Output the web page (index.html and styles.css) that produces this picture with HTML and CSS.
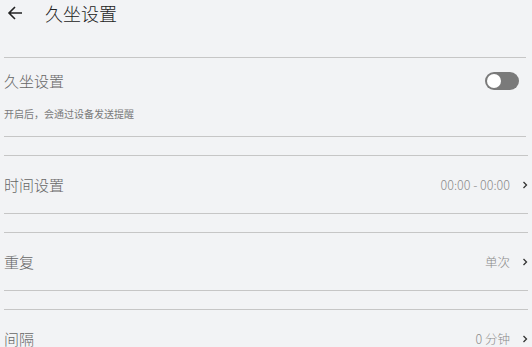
FILE: index.html
```html
<!DOCTYPE html>
<html lang="zh-CN">
<head>
  <meta charset="UTF-8">
  <title>久坐设置</title>
  <link rel="stylesheet" href="styles.css">
</head>
<body>

  <!-- 顶部栏 -->
  <div class="topbar">
    <svg class="back" width="16" height="16" viewBox="0 0 16 16">
      <path d="M15 8H2M8 2L2 8l6 6" fill="none" stroke="#222" stroke-width="1.6"/>
    </svg>
    <span class="page-title">久坐设置</span>
  </div>

  <!-- 开关 -->
  <div class="group switch-group">
    <div class="row-head">
      <span class="label">久坐设置</span>
      <span class="toggle"><span class="knob"></span></span>
    </div>
    <div class="hint">开启后，会通过设备发送提醒</div>
  </div>

  <div class="group item">
    <span class="label">时间设置</span>
    <span class="value">00:00 - 00:00</span>
    <svg class="arrow" width="6" height="8" viewBox="0 0 6 8"><path d="M1.5 1l3 3-3 3" fill="none" stroke="#333" stroke-width="1.3"/></svg>
  </div>

  <div class="group item">
    <span class="label">重复</span>
    <span class="value">单次</span>
    <svg class="arrow" width="6" height="8" viewBox="0 0 6 8"><path d="M1.5 1l3 3-3 3" fill="none" stroke="#333" stroke-width="1.3"/></svg>
  </div>

  <div class="group item">
    <span class="label">间隔</span>
    <span class="value">0 分钟</span>
    <svg class="arrow" width="6" height="8" viewBox="0 0 6 8"><path d="M1.5 1l3 3-3 3" fill="none" stroke="#333" stroke-width="1.3"/></svg>
  </div>

</body>
</html>
```

FILE: styles.css
```css
body {
  margin: 0;
  padding: 0 4px 0 4px;
  background-color: #f2f3f5;
  font-family: "Noto Sans CJK SC", "Noto Sans", sans-serif;
}

.topbar {
  height: 57px;
  display: flex;
  align-items: flex-start;
  box-sizing: border-box;
}

.back {
  margin: 5px 0 0 3px;
}

.page-title {
  margin-left: 22px;
  font-size: 18px;
  line-height: 26px;
  font-weight: 300;
  color: #222;
}

.group {
  border-top: 1px solid #c6c6c6;
  border-bottom: 1px solid #c6c6c6;
  margin-bottom: 18px;
  margin-right: 2px;
}

.switch-group {
  padding: 13px 0 15px;
}

.row-head {
  display: flex;
  align-items: center;
  justify-content: space-between;
  height: 20px;
}

.label {
  font-size: 15px;
  line-height: 20px;
  font-weight: 300;
  color: #666;
}

.hint {
  margin-top: 16px;
  font-size: 10px;
  line-height: 14px;
  color: #7a7a7a;
}

.toggle {
  width: 34px;
  height: 18px;
  border-radius: 9px;
  background-color: #7a7a7a;
  margin-right: 7px;
  display: flex;
  align-items: center;
  padding-left: 2px;
  box-sizing: border-box;
}

.knob {
  width: 14px;
  height: 14px;
  border-radius: 50%;
  background-color: #fff;
}

.item {
  height: 57px;
  display: flex;
  align-items: center;
  margin-right: 0;
}

.item .label {
  flex: 1;
}

.value {
  font-size: 12.5px;
  font-weight: 300;
  color: #8a8a8a;
}

.arrow {
  margin-left: 12px;
}
```
